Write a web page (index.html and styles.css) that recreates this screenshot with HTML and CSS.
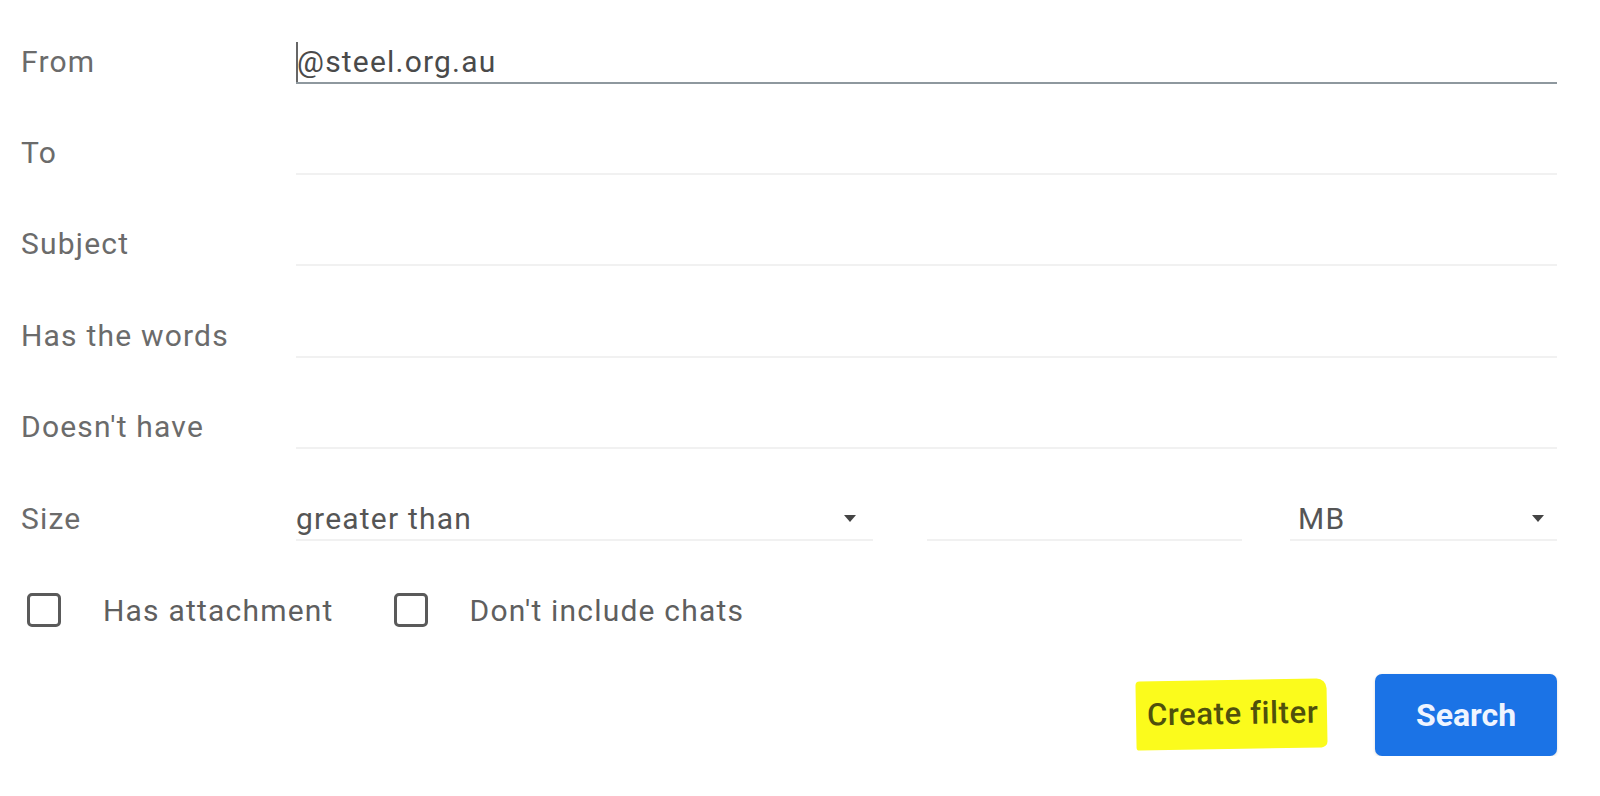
FILE: index.html
```html
<!DOCTYPE html>
<html>
<head>
    <title>Search filter</title>
    <link rel="stylesheet" href="styles.css">
</head>
<body>
    <form class="filter-form">
        <div class="row">
            <label class="label">From</label>
            <div class="field focused"><span class="caret"></span>@steel.org.au</div>
        </div>
        <div class="row">
            <label class="label">To</label>
            <div class="field"></div>
        </div>
        <div class="row">
            <label class="label">Subject</label>
            <div class="field"></div>
        </div>
        <div class="row">
            <label class="label">Has the words</label>
            <div class="field"></div>
        </div>
        <div class="row">
            <label class="label">Doesn't have</label>
            <div class="field"></div>
        </div>
        <div class="row">
            <label class="label">Size</label>
            <div class="size-group">
                <div class="field select size-op">greater than<span class="arrow"></span></div>
                <div class="field size-num"></div>
                <div class="field select size-unit">MB<span class="arrow"></span></div>
            </div>
        </div>
        <div class="row checks">
            <div class="check"><span class="box"></span>Has attachment</div>
            <div class="check"><span class="box"></span>Don't include chats</div>
        </div>
        <div class="actions">
            <span class="create-filter">Create filter</span>
            <button type="button" class="search-btn">Search</button>
        </div>
    </form>
</body>
</html>
```

FILE: styles.css
```css
body {
    margin: 0;
    background-color: #fff;
    font-family: Roboto, "Liberation Sans", sans-serif;
    letter-spacing: 1.2px;
}
.filter-form {
    padding: 16px 43px 0 21px;
}
.row {
    display: grid;
    grid-template-columns: 275px 1fr;
    align-items: center;
    height: 91.4px;
}
.label {
    font-size: 30px;
    color: #6b6b6b;
    line-height: 1;
}
.field {
    box-sizing: border-box;
    height: 44px;
    padding-top: 2px;
    display: flex;
    align-items: center;
    border-bottom: 2px solid #f1f1f1;
    font-size: 30px;
    color: #555;
    position: relative;
}
.field.focused {
    border-bottom-color: #8e989e;
    color: #4a4a4a;
}
.caret {
    display: block;
    width: 2px;
    height: 40px;
    background-color: #666;
    margin-right: -1px;
    align-self: flex-end;
}
.size-group {
    display: flex;
}
.select {
    justify-content: space-between;
}
.size-op {
    width: 577px;
    padding-right: 17px;
}
.size-num {
    width: 315px;
    margin-left: 54px;
}
.size-unit {
    flex: 1;
    margin-left: 48px;
    padding-left: 8px;
    padding-right: 13px;
}
.arrow {
    width: 0;
    height: 0;
    border-left: 6px solid transparent;
    border-right: 6px solid transparent;
    border-top: 7px solid #444;
}
.checks {
    display: flex;
    align-items: center;
    padding-left: 6px;
}
.check {
    display: flex;
    align-items: center;
    font-size: 30px;
    color: #5f5f5f;
    margin-right: 60px;
}
.box {
    box-sizing: border-box;
    width: 34px;
    height: 34px;
    border: 3px solid #5a5a5a;
    border-radius: 5px;
    margin-right: 42px;
}
.actions {
    display: flex;
    justify-content: flex-end;
    align-items: center;
    margin-top: 18px;
}
.create-filter {
    font-size: 31px;
    font-weight: 500;
    color: #4f500c;
    background-color: #fbfb1c;
    padding: 15px 9px 17px 11px;
    border-radius: 4px 10px 6px 3px;
    transform: rotate(-1deg);
    margin-right: 48px;
    letter-spacing: 0.6px;
}
.search-btn {
    width: 182px;
    height: 82px;
    border: 0;
    border-radius: 7px;
    background-color: #1b73e6;
    color: #eef4ff;
    font-family: Roboto, "Liberation Sans", sans-serif;
    font-size: 32px;
    font-weight: 700;
    letter-spacing: 0;
    box-shadow: 0 1px 3px rgba(0, 0, 0, 0.15);
}
```
